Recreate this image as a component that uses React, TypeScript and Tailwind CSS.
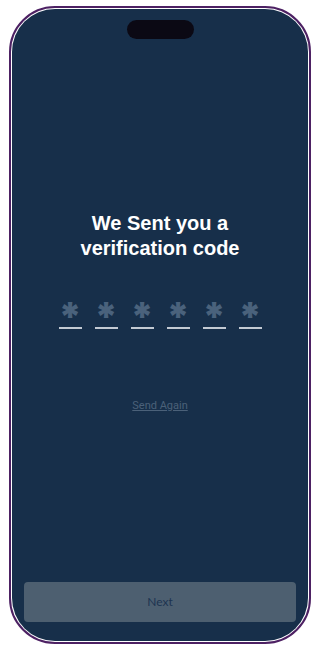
import React from "react";

export default function App() {

    const digits = [0, 1, 2, 3, 4, 5];

    return (

        <div className="w-[320px] h-[650px] bg-white pt-[6px] pl-[9px]">

            <div className="w-[302px] h-[638px] rounded-[46px] border-2 border-[#4d2163] bg-white p-[1px]">

                <div className="relative h-full w-full rounded-[43px] bg-[#172f4a] flex flex-col items-center">

                    <div className="mt-[11px] w-[67px] h-[19px] rounded-full bg-[#0b0914]" />

                    <h1
                        className="mt-[172px] text-center text-white text-[20px] font-bold leading-[25px]"
                        style={{ fontFamily: "'Liberation Sans', Arial, sans-serif" }}
                    >
                        We Sent you a
                        <br />
                        verification code
                    </h1>

                    <div className="mt-[45px] flex gap-[13px]">

                        {digits.map((d) => (

                            <div key={d} className="flex flex-col items-center w-[23px]">

                                <span
                                    className="h-[20px] text-[39px] font-black leading-[20px] text-[#4a627c]"
                                    style={{ fontFamily: "Inter, sans-serif" }}
                                >
                                    *
                                </span>

                                <div className="mt-[1px] w-[23px] h-[2px] bg-[#c3cad3]" />

                            </div>

                        ))}

                    </div>

                    <a
                        className="mt-[69px] text-[11px] text-[#4b6179] underline"
                        style={{ fontFamily: "Roboto, sans-serif" }}
                    >
                        Send Again
                    </a>

                    <div className="flex-1" />

                    <button
                        className="mb-[19px] w-[272px] h-[40px] rounded-[4px] bg-[#4d5f70] text-[12px] text-[#1d3450]"
                        style={{ fontFamily: "Lato, sans-serif" }}
                    >
                        Next
                    </button>

                </div>

            </div>

        </div>

    );

}
